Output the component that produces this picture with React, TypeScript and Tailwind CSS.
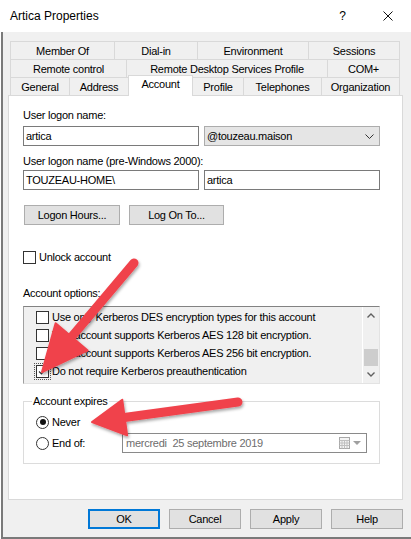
import React from "react";

interface Tab {
    label: string;
    width: number;
}

const rows: Tab[][] = [
    [
        { label: "Member Of", width: 104 },
        { label: "Dial-in", width: 83 },
        { label: "Environment", width: 111 },
        { label: "Sessions", width: 92 },
    ],
    [
        { label: "Remote control", width: 116 },
        { label: "Remote Desktop Services Profile", width: 201 },
        { label: "COM+", width: 73 },
    ],
    [
        { label: "General", width: 59 },
        { label: "Address", width: 59 },
        { label: "Account", width: 65 },
        { label: "Profile", width: 50 },
        { label: "Telephones", width: 78 },
        { label: "Organization", width: 79 },
    ],
];

const options = [
    { label: "Use only Kerberos DES encryption types for this account", checked: false },
    { label: "This account supports Kerberos AES 128 bit encryption.", checked: false },
    { label: "This account supports Kerberos AES 256 bit encryption.", checked: false },
    { label: "Do not require Kerberos preauthentication", checked: true },
];

const CheckBox = ({ checked = false, focus = false }: { checked?: boolean; focus?: boolean }) => (
    <span
        className={`flex h-[13px] w-[13px] shrink-0 items-center justify-center border border-[#333333] bg-white ${
            focus ? "outline outline-1 outline-offset-1 outline-dotted outline-[#555555]" : ""
        }`}
    >
        {checked && (
            <svg width="11" height="11" viewBox="0 0 11 11">
                <path d="M2 5.5 L4.5 8 L9 2.5" fill="none" stroke="#333333" strokeWidth="1.1" />
            </svg>
        )}
    </span>
);

const Radio = ({ checked = false }: { checked?: boolean }) => (
    <span className="flex h-[13px] w-[13px] shrink-0 items-center justify-center rounded-full border border-[#333333] bg-white">
        {checked && <span className="h-[6px] w-[6px] rounded-full bg-[#111111]" />}
    </span>
);

const Button = ({ label, width, primary = false }: { label: string; width: number; primary?: boolean }) => (
    <div
        style={{ width }}
        className={`flex h-[20px] items-center justify-center bg-[#e1e1e1] ${
            primary ? "border-2 border-[#0078d7]" : "border border-[#adadad]"
        }`}
    >
        {label}
    </div>
);

const Arrow = ({ x1, y1, x2, y2, len, half }: { x1: number; y1: number; x2: number; y2: number; len: number; half: number }) => {
    const dx = x2 - x1;
    const dy = y2 - y1;
    const d = Math.hypot(dx, dy);
    const ux = dx / d;
    const uy = dy / d;
    const bx = x2 - ux * len;
    const by = y2 - uy * len;
    const px = -uy;
    const py = ux;
    const head = `${x2},${y2} ${bx + px * half},${by + py * half} ${bx - px * half},${by - py * half}`;
    return (
        <g>
            <line x1={x1} y1={y1} x2={bx + ux * 4} y2={by + uy * 4} stroke="#f0434c" strokeWidth="9" strokeLinecap="round" />
            <polygon points={head} fill="#f0434c" stroke="#f0434c" strokeWidth="2" strokeLinejoin="round" />
        </g>
    );
};

export default function App() {
    return (
        <div className="relative h-[539px] w-[411px] overflow-hidden bg-white font-['Liberation_Sans',Arial,sans-serif] text-[11px] tracking-[-0.25px] text-black">
            {/* Title bar */}
            <div className="flex h-[32px] items-center pl-[10px] text-[12px] tracking-normal">
                <span>Artica Properties</span>
                <span className="ml-auto">?</span>
                <svg className="ml-[37px] mr-[18px]" width="10" height="10" viewBox="0 0 10 10">
                    <path d="M0.5 0.5 L9.5 9.5 M9.5 0.5 L0.5 9.5" stroke="#111111" strokeWidth="1" />
                </svg>
            </div>

            {/* Window body */}
            <div className="ml-[1px] h-[507px] border-b-2 border-l-2 border-[#7a7a7a] bg-[#f0f0f0] pl-[5px] pt-[9px]">
                {/* Tabs */}
                <div className="ml-[2px] flex flex-col">
                    {rows.map((row, ri) => (
                        <div key={ri} className="flex h-[18px] items-end">
                            {row.map((tab, ti) => {
                                const selected = tab.label === "Account";
                                const afterSelected = ri === 2 && ti === 3;
                                const last = ti === row.length - 1;
                                return (
                                    <div
                                        key={tab.label}
                                        style={{ width: tab.width }}
                                        className={
                                            selected
                                                ? "relative z-10 mb-[-1px] flex h-[21px] items-center justify-center border-x border-t border-[#d9d9d9] bg-white pb-[3px]"
                                                : `flex h-[18px] items-center justify-center border-t border-[#d9d9d9] pt-[1px] ${afterSelected ? "" : "border-l"} ${last ? "border-r" : ""}`
                                        }
                                    >
                                        {tab.label}
                                    </div>
                                );
                            })}
                        </div>
                    ))}
                </div>

                {/* Tab panel */}
                <div className="flex h-[405px] w-[395px] flex-col border border-[#d9d9d9] bg-white px-[14px] pt-[12px]">
                    <div className="leading-[15px]">User logon name:</div>
                    <div className="mt-[3px] flex gap-[5px]">
                        <div className="flex h-[20px] w-[176px] items-center border border-[#7a7a7a] px-[2px]">artica</div>
                        <div className="flex h-[20px] w-[176px] items-center justify-between border border-[#acacac] bg-[#e5e5e5] px-[2px]">
                            <span>@touzeau.maison</span>
                            <svg className="mr-[3px]" width="9" height="5" viewBox="0 0 9 5">
                                <path d="M0.5 0.5 L4.5 4.5 L8.5 0.5" fill="none" stroke="#333333" strokeWidth="1" />
                            </svg>
                        </div>
                    </div>

                    <div className="mt-[8px] leading-[15px]">User logon name (pre-Windows 2000):</div>
                    <div className="mt-[1px] flex gap-[5px]">
                        <div className="flex h-[20px] w-[176px] items-center border border-[#7a7a7a] px-[2px]">TOUZEAU-HOME\</div>
                        <div className="flex h-[20px] w-[176px] items-center border border-[#7a7a7a] px-[2px]">artica</div>
                    </div>

                    <div className="ml-[1px] mt-[15px] flex gap-[9px]">
                        <Button label="Logon Hours..." width={96} />
                        <Button label="Log On To..." width={95} />
                    </div>

                    <div className="mt-[25px] flex h-[15px] items-center gap-[3px]">
                        <CheckBox />
                        <span>Unlock account</span>
                    </div>

                    <div className="mt-[21px] leading-[15px]">Account options:</div>

                    {/* Options list */}
                    <div className="mt-[5px] flex h-[78px] w-[357px] border border-b-[#e3e3e3] border-l-[#a0a0a0] border-r-[#e3e3e3] border-t-[#828282] bg-[#f0f0f0]">
                        <div className="flex flex-1 flex-col pt-[1px]">
                            {options.map((o, i) => (
                                <div key={i} className="flex h-[18px] items-center gap-[3px] pl-[12px]">
                                    <CheckBox checked={o.checked} focus={o.checked} />
                                    <span>{o.label}</span>
                                </div>
                            ))}
                        </div>
                        <div className="flex w-[17px] flex-col border-l border-white">
                            <div className="flex h-[17px] items-center justify-center">
                                <svg width="8" height="5" viewBox="0 0 8 5">
                                    <path d="M0.5 4.5 L4 1 L7.5 4.5" fill="none" stroke="#606060" strokeWidth="1.4" />
                                </svg>
                            </div>
                            <div className="flex flex-1 flex-col justify-end">
                                <div className="mx-[1px] h-[17px] bg-[#cdcdcd]" />
                            </div>
                            <div className="flex h-[17px] items-center justify-center">
                                <svg width="8" height="5" viewBox="0 0 8 5">
                                    <path d="M0.5 0.5 L4 4 L7.5 0.5" fill="none" stroke="#606060" strokeWidth="1.4" />
                                </svg>
                            </div>
                        </div>
                    </div>

                    {/* Account expires group */}
                    <div className="relative mt-[17px] flex h-[63px] w-[357px] flex-col gap-[1px] border border-[#dcdcdc] pl-[12px] pt-[10px]">
                        <span className="absolute left-[8px] top-[-8px] bg-white px-[1px] leading-[15px]">Account expires</span>
                        <div className="flex h-[20px] items-center gap-[3px]">
                            <Radio checked />
                            <span>Never</span>
                        </div>
                        <div className="flex h-[20px] items-center">
                            <Radio />
                            <span className="ml-[3px] w-[70px]">End of:</span>
                            <div className="flex h-[20px] w-[245px] items-center border border-[#8a8a8a] bg-white pl-[3px] pr-[5px] text-[#6d6d6d]">
                                <span className="whitespace-pre">mercredi  25 septembre 2019</span>
                                <svg className="ml-auto" width="11" height="12" viewBox="0 0 11 12">
                                    <rect x="0.5" y="0.5" width="10" height="11" fill="#f4f4f4" stroke="#a8a8a8" />
                                    <path d="M0.5 3.5 H10.5 M0.5 6 H10.5 M0.5 8.5 H10.5 M3 3.5 V11.5 M5.5 3.5 V11.5 M8 3.5 V11.5" stroke="#c0c0c0" strokeWidth="1" />
                                </svg>
                                <svg className="ml-[3px]" width="8" height="4" viewBox="0 0 8 4">
                                    <path d="M0 0 H8 L4 4 Z" fill="#a0a0a0" />
                                </svg>
                            </div>
                        </div>
                    </div>
                </div>

                {/* Dialog buttons */}
                <div className="mt-[9px] flex w-[395px] justify-end gap-[9px]">
                    <Button label="OK" width={72} primary />
                    <Button label="Cancel" width={72} />
                    <Button label="Apply" width={72} />
                    <Button label="Help" width={72} />
                </div>
            </div>

            {/* Annotation arrows */}
            <svg className="pointer-events-none absolute left-0 top-0" width="411" height="539" viewBox="0 0 411 539">
                <defs>
                    <filter id="shadow" x="-20%" y="-20%" width="140%" height="140%">
                        <feDropShadow dx="1" dy="2" stdDeviation="1.5" floodColor="#000000" floodOpacity="0.35" />
                    </filter>
                </defs>
                <g filter="url(#shadow)">
                    <Arrow x1={134} y1={263} x2={42} y2={372} len={46} half={21} />
                    <Arrow x1={238} y1={402} x2={92} y2={422} len={33} half={18} />
                </g>
            </svg>
        </div>
    );
}
